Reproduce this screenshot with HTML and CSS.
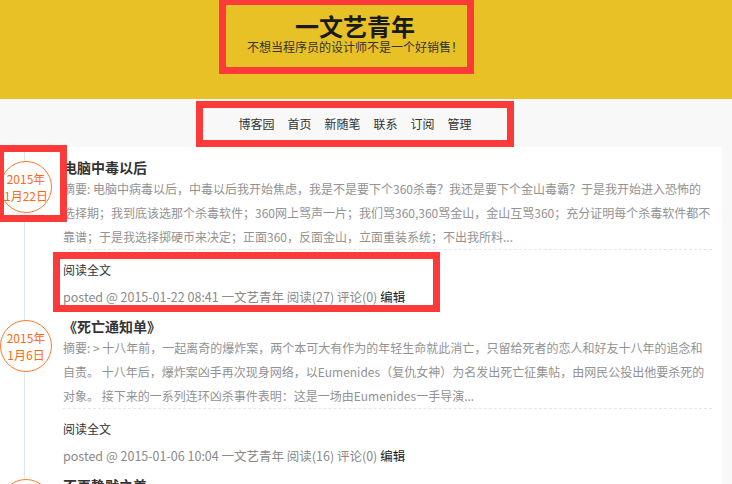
FILE: index.html
```html
<!DOCTYPE html>
<html lang="zh-CN">
<head>
    <meta charset="UTF-8">
    <meta name="viewport" content="width=device-width, initial-scale=1.0">
    <title>一文艺青年 - 博客园</title>
    <link rel="stylesheet" href="styles.css">
</head>
<body>

    <header class="top">
        <h1 class="blog-title">一文艺青年</h1>
        <p class="blog-sub">不想当程序员的设计师不是一个好销售！</p>
    </header>

    <nav class="menu">
        <a href="#">博客园</a>
        <a href="#">首页</a>
        <a href="#">新随笔</a>
        <a href="#">联系</a>
        <a href="#">订阅</a>
        <a href="#">管理</a>
    </nav>

    <div class="main">
        <div class="day">
            <div class="date"><span>2015年</span><span>1月22日</span></div>
            <div class="post">
                <h2 class="post-title"><a href="#">电脑中毒以后</a></h2>
                <div class="summary">摘要: 电脑中病毒以后，中毒以后我开始焦虑，我是不是要下个360杀毒？我还是要下个金山毒霸？于是我开始进入恐怖的选择期；我到底该选那个杀毒软件；360网上骂声一片；我们骂360,360骂金山，金山互骂360；充分证明每个杀毒软件都不靠谱；于是我选择掷硬币来决定；正面360，反面金山，立面重装系统；不出我所料...</div>
                <a class="more" href="#">阅读全文</a>
                <p class="desc">posted @ 2015-01-22 08:41 一文艺青年 阅读(27) 评论(0) <a href="#">编辑</a></p>
            </div>
        </div>

        <div class="day">
            <div class="date"><span>2015年</span><span>1月6日</span></div>
            <div class="post">
                <h2 class="post-title"><a href="#">《死亡通知单》</a></h2>
                <div class="summary">摘要: &gt; 十八年前，一起离奇的爆炸案，两个本可大有作为的年轻生命就此消亡，只留给死者的恋人和好友十八年的追念和自责。 十八年后，爆炸案凶手再次现身网络，以Eumenides（复仇女神）为名发出死亡征集帖，由网民公投出他要杀死的对象。 接下来的一系列连环凶杀事件表明：这是一场由Eumenides一手导演...</div>
                <a class="more" href="#">阅读全文</a>
                <p class="desc">posted @ 2015-01-06 10:04 一文艺青年 阅读(16) 评论(0) <a href="#">编辑</a></p>
            </div>
        </div>

        <div class="day">
            <div class="date"><span>2014年</span><span>12月9日</span></div>
            <div class="post">
                <h2 class="post-title"><a href="#">不再静默之美</a></h2>
            </div>
        </div>
    </div>

    <!-- red marks drawn over the page -->
    <div class="mark mark-head"></div>
    <div class="mark mark-nav"></div>
    <div class="mark mark-date"></div>
    <div class="mark mark-more"></div>

</body>
</html>
```

FILE: styles.css
```css
body {
    font-family: "Noto Sans CJK SC", "Noto Sans", sans-serif;
    margin: 0;
    padding: 0;
    background-color: #f8f8f8;
    color: #333;
    font-size: 12px;
    overflow: hidden;
}

a {
    color: #333;
    text-decoration: none;
}

.top {
    background-color: #e8c127;
    height: 99px;
    box-sizing: border-box;
    padding: 13px 22px 0 0;
    text-align: center;
}

.blog-title {
    margin: 0;
    font-size: 24px;
    line-height: 26px;
    font-weight: bold;
    color: #1a1a1a;
}

.blog-sub {
    margin: 1px 0 0;
    font-size: 12px;
    line-height: 14px;
    color: #333;
}

.menu {
    height: 48px;
    padding-right: 22px;
    display: flex;
    justify-content: center;
    align-items: center;
    gap: 13px;
}

.menu a {
    font-size: 12px;
    color: #333;
}

.main {
    margin-right: 10px;
    background: #fff linear-gradient(#dfe6ee, #dfe6ee) no-repeat 24px 0 / 1px 100%;
    padding: 10px 10px 0 0;
}

.day {
    display: flex;
    margin-bottom: 9px;
}

.day + .day + .day {
    margin-top: 5px;
}

.date {
    flex: none;
    width: 50px;
    height: 50px;
    margin: 4px 11px 0 0;
    border: 1px solid #fd7b2e;
    border-radius: 50%;
    background: #fff;
    color: #fc6a16;
    display: flex;
    flex-direction: column;
    justify-content: center;
    align-items: center;
    line-height: 17px;
    font-size: 12px;
}

.post {
    flex: 1;
    min-width: 0;
}

.post-title {
    margin: 0;
    font-size: 14px;
    line-height: 20px;
    font-weight: bold;
}

.summary {
    font-size: 12px;
    line-height: 24px;
    color: #929292;
    border-bottom: 1px dashed #e6e6e6;
}

.more {
    display: block;
    margin-top: 10px;
    line-height: 20px;
    font-size: 12px;
}

.desc {
    margin: 7px 0 0;
    font-size: 12.5px;
    line-height: 20px;
    color: #8a8a8a;
}

.desc a {
    color: #222;
}

/* annotation boxes */
.mark {
    position: absolute;
    border: 7px solid #fd3a3a;
    box-sizing: border-box;
}

.mark-head {
    left: 219px;
    top: -2px;
    width: 255px;
    height: 76px;
}

.mark-nav {
    left: 196px;
    top: 101px;
    width: 318px;
    height: 46px;
}

.mark-date {
    left: -3px;
    top: 145px;
    width: 70px;
    height: 77px;
}

.mark-more {
    left: 53px;
    top: 252px;
    width: 387px;
    height: 60px;
}
```
